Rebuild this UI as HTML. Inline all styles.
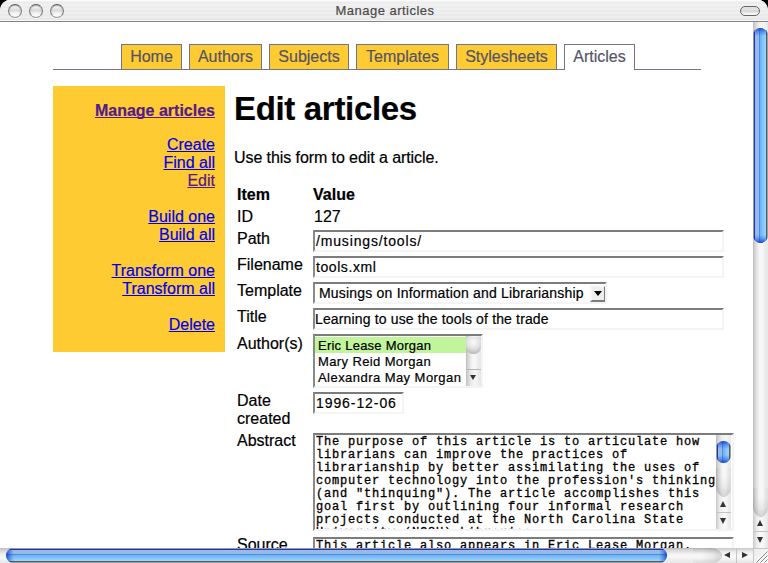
<!DOCTYPE html>
<html><head><meta charset="utf-8">
<style>
*{margin:0;padding:0;box-sizing:border-box}
html,body{width:768px;height:563px;overflow:hidden;background:#000}
body{position:relative;font-family:"Liberation Sans",sans-serif;-webkit-text-stroke:0.2px currentColor}
.a{position:absolute}
#win{position:absolute;left:0;top:0;width:768px;height:563px;background:#fff;border-radius:10px 10px 0 0;overflow:hidden}
#tb{position:absolute;left:0;top:0;width:768px;height:22px;border-bottom:1px solid #858585;
 background:linear-gradient(#fbfbfb 0,#fbfbfb 1px,transparent 1px,transparent 20px,#f5f5f5 20px),repeating-linear-gradient(rgba(255,255,255,.2) 0,rgba(255,255,255,.2) 2px,rgba(0,0,0,0) 2px,rgba(0,0,0,0) 4px),linear-gradient(#eeeeee,#e8e8e8);}
.tl{position:absolute;top:4px;width:14px;height:14px;border-radius:50%;border:1px solid;border-color:#5e5e5e #7e7e7e #959595 #7e7e7e;box-shadow:inset 0 1px 1px rgba(0,0,0,.25),0 1px 0 rgba(255,255,255,.6);background:radial-gradient(ellipse 9px 6px at 50% 85%,#fcfcfc 0,rgba(252,252,252,0) 100%),linear-gradient(#ececec 0%,#f2f2f2 20%,#d2d2d2 48%,#e4e4e4 70%,#f6f6f6 100%)}
#title{position:absolute;left:1px;width:768px;top:3px;text-align:center;font-size:13px;color:#4a4a4a;letter-spacing:0.48px;line-height:15px}
#pill{position:absolute;left:740px;top:6px;width:20px;height:10px;border-radius:5px;border:1px solid #666;background:linear-gradient(#e4e4e4,#e0e0e0 35%,#d4d4d4 50%,#f2f2f2 80%,#fafafa)}
.tab{position:absolute;top:44px;height:26px;border:1px solid #737389;border-bottom:0;background:#ffcb32;color:#555566;font-size:16px;line-height:18px;padding-top:3px;text-align:center}
.tab.on{background:#fff;height:26px}
#tabline{position:absolute;left:53px;top:69px;width:648px;height:1px;background:#737389}
#side{position:absolute;left:53px;top:86px;width:172px;height:266px;background:#ffcb32}
.sl{position:absolute;right:10px;font-size:16px;line-height:18px;white-space:nowrap;text-align:right}
.sl a{color:#0000ee;text-decoration:underline;text-decoration-skip-ink:none}
.sl a.v{color:#551a8b}
.lbl{position:absolute;left:237px;font-size:16px;line-height:18px;color:#000;white-space:nowrap}
.inp{position:absolute;left:313px;height:22px;border-style:solid;border-width:2px;border-color:#7c7c7c #f4f4f4 #f4f4f4 #8a8a8a;background:#fff;font-size:14px;line-height:15px;padding:2px 0 0 1px;white-space:nowrap;overflow:hidden;color:#000}
.ta{position:absolute;left:313px;width:421px;border-style:solid;border-width:2px;border-color:#7c7c7c #f4f4f4 #f4f4f4 #8a8a8a;background:#fff;font-family:"Liberation Mono",monospace;font-size:12px;letter-spacing:0.8px;-webkit-text-stroke:0.3px #000;line-height:13px;white-space:pre;overflow:hidden;padding:1px 0 0 1px}

.vtrack{background:linear-gradient(90deg,#b8b8b8 0,#c8c8c8 1px,#d6d6d6 2px,#e4e4e4 4px,#f4f4f4 6px,#f8f8f8 9px,#ececec 12px,#e8e8e8 15px)}
.htrack{background:linear-gradient(180deg,#b8b8b8 0,#c8c8c8 1px,#d6d6d6 2px,#e4e4e4 4px,#f4f4f4 6px,#f8f8f8 9px,#ececec 12px,#e8e8e8 15px)}
.vthumb{border-radius:7.5px;background:linear-gradient(90deg,#a09890 0,#a09890 1px,#0a3cc8 1px,#0a3cc8 2px,#9ab8e8 2px,#9ab8e8 6px,#4a90e0 6px,#4a90e0 7px,#6ab0f8 7px,#9ad8ff 13px,#5a5a5a 13px,#5a5a5a 14px,#a0a0a0 14px)}
.vthumb:before{content:"";position:absolute;left:0;top:0;right:0;bottom:0;border-radius:inherit;background:linear-gradient(rgba(0,40,190,.75) 0,rgba(10,60,200,.35) 4px,rgba(10,60,200,0) 8px,rgba(10,60,200,0) calc(100% - 8px),rgba(10,60,200,.35) calc(100% - 4px),rgba(0,40,190,.75) 100%)}
.hthumb{border-radius:7.5px;background:linear-gradient(180deg,#a09890 0,#a09890 1px,#0a3cc8 1px,#0a3cc8 2px,#9ab8e8 2px,#9ab8e8 6px,#4a90e0 6px,#4a90e0 7px,#6ab0f8 7px,#9ad8ff 13px,#5a5a5a 13px,#5a5a5a 14px,#a0a0a0 14px)}
.hthumb:before{content:"";position:absolute;left:0;top:0;right:0;bottom:0;border-radius:inherit;background:linear-gradient(90deg,rgba(0,40,190,.75) 0,rgba(10,60,200,.35) 4px,rgba(10,60,200,0) 8px,rgba(10,60,200,0) calc(100% - 8px),rgba(10,60,200,.35) calc(100% - 4px),rgba(0,40,190,.75) 100%)}
.varr{width:15px;background:linear-gradient(90deg,#c0c0c0,#e8e8e8 30%,#f6f6f6 60%,#e4e4e4);border-top:1px solid #b8b8b8}
.harr{height:15px;background:linear-gradient(180deg,#c0c0c0,#e8e8e8 30%,#f6f6f6 60%,#e4e4e4);border-left:1px solid #b8b8b8}
.vbtn{background:linear-gradient(90deg,#c8c8c8,#ececec 25%,#fafafa 55%,#f0f0f0 80%,#e4e4e4)}
.hbtn{background:linear-gradient(180deg,#c8c8c8,#ececec 25%,#fafafa 55%,#f0f0f0 80%,#e4e4e4)}
.vend{border-radius:0 0 7.5px 7.5px/0 0 10px 10px;box-shadow:0 1px 0 #c8c8c8}
.vend:after{content:"";position:absolute;left:0;bottom:0;width:15px;height:28px;border-radius:0 0 7.5px 7.5px/0 0 10px 10px;background:linear-gradient(90deg,rgba(0,0,0,.06),rgba(0,0,0,0) 40%,rgba(0,0,0,0) 70%,rgba(0,0,0,.04)),linear-gradient(rgba(0,0,0,0) 30%,rgba(0,0,0,.05) 70%,rgba(0,0,0,.14))}
.hend{border-radius:0 10px 10px 0/0 7.5px 7.5px 0;box-shadow:1px 0 0 #c8c8c8}
.hend:after{content:"";position:absolute;top:0;right:0;height:15px;width:28px;border-radius:0 10px 10px 0/0 7.5px 7.5px 0;background:linear-gradient(180deg,rgba(0,0,0,.06),rgba(0,0,0,0) 40%,rgba(0,0,0,0) 70%,rgba(0,0,0,.04)),linear-gradient(90deg,rgba(0,0,0,0) 30%,rgba(0,0,0,.05) 70%,rgba(0,0,0,.14))}
.up{position:absolute;width:0;height:0;border-left:3.5px solid transparent;border-right:3.5px solid transparent;border-bottom:6px solid #333}
.dn{position:absolute;width:0;height:0;border-left:3.5px solid transparent;border-right:3.5px solid transparent;border-top:6px solid #333}
.lt{position:absolute;width:0;height:0;border-top:3.5px solid transparent;border-bottom:3.5px solid transparent;border-right:6px solid #333}
.rt{position:absolute;width:0;height:0;border-top:3.5px solid transparent;border-bottom:3.5px solid transparent;border-left:6px solid #333}
</style></head><body>
<div id="win">
 <div id="tb">
  <div class="tl" style="left:8px"></div>
  <div class="tl" style="left:29px"></div>
  <div class="tl" style="left:50px"></div>
  <div id="title">Manage articles</div>
  <div id="pill"></div>
 </div>

 <div class="tab" style="left:121px;width:61px">Home</div>
 <div class="tab" style="left:189px;width:73px">Authors</div>
 <div class="tab" style="left:269px;width:80px">Subjects</div>
 <div class="tab" style="left:356px;width:93px">Templates</div>
 <div class="tab" style="left:456px;width:101px">Stylesheets</div>
 <div id="tabline"></div>
 <div class="tab on" style="left:564px;width:71px">Articles</div>

 <div id="side"></div>
 <div class="sl" style="left:53px;width:162px;top:102px;font-weight:bold"><a class="v">Manage articles</a></div>
 <div class="sl" style="left:53px;width:162px;top:136px"><a>Create</a><br><a>Find all</a><br><a class="v">Edit</a><br><br><a>Build one</a><br><a>Build all</a><br><br><a>Transform one</a><br><a>Transform all</a><br><br><a>Delete</a></div>

 <div class="a" style="left:234px;top:91px;font-size:33px;letter-spacing:-0.33px;font-weight:bold;line-height:36px;white-space:nowrap">Edit articles</div>
 <div class="a" style="left:234px;top:149px;font-size:16px;letter-spacing:-0.08px;line-height:18px;white-space:nowrap">Use this form to edit a article.</div>

 <div class="lbl" style="top:186px;font-weight:bold">Item</div>
 <div class="lbl" style="top:186px;left:313px;font-weight:bold">Value</div>
 <div class="lbl" style="top:208px">ID</div>
 <div class="lbl" style="top:208px;left:314px">127</div>
 <div class="lbl" style="top:230px">Path</div>
 <div class="lbl" style="top:256px">Filename</div>
 <div class="lbl" style="top:282px">Template</div>
 <div class="lbl" style="top:308px">Title</div>
 <div class="lbl" style="top:335px">Author(s)</div>
 <div class="lbl" style="top:392px">Date<br>created</div>
 <div class="lbl" style="top:432px">Abstract</div>
 <div class="lbl" style="top:536px">Source</div>

 <div class="inp" style="top:230px;width:411px;letter-spacing:0.84px">/musings/tools/</div>
 <div class="inp" style="top:256px;width:411px;letter-spacing:0.57px">tools.xml</div>
 <div class="inp" style="top:282px;width:294px;padding-left:4px;letter-spacing:0.2px">Musings on Information and Librarianship
  <div class="a" style="left:275px;top:1px;width:16px;height:17px;border-style:solid;border-width:2px;border-color:#f6f6f6 #7c7c7c #7c7c7c #f6f6f6;background:#eee">
   <div class="a" style="left:2px;top:4px;width:0;height:0;border-left:4px solid transparent;border-right:4px solid transparent;border-top:5px solid #000"></div>
  </div>
 </div>
 <div class="inp" style="top:308px;width:411px;padding-left:0;letter-spacing:0.15px">Learning to use the tools of the trade</div>

 <div class="inp" style="top:334px;width:170px;height:54px;padding:1px 0 0 0">
  <div style="background:#c0f59b;height:16px;width:151px;padding-left:3px;line-height:16px;padding-top:1px;font-size:13px;letter-spacing:0.24px">Eric Lease Morgan</div>
  <div style="height:16px;padding-left:3px;line-height:16px;padding-top:1px;font-size:13px;letter-spacing:0.38px">Mary Reid Morgan</div>
  <div style="height:16px;padding-left:3px;line-height:16px;padding-top:1px;font-size:13px;letter-spacing:0.45px">Alexandra May Morgan</div>
  <div class="a vtrack" style="left:151px;top:0;width:15px;height:50px"></div>
  <div class="a" style="left:151px;top:1px;width:15px;height:17px;border-radius:0 0 7px 7px;background:radial-gradient(circle at 50% 30%,#fafafa 0,#e2e2e2 45%,#bcbcbc 80%,#a8a8a8 100%)"></div>
  <div class="a varr" style="left:151px;top:33px;height:17px"><div class="dn" style="left:4px;top:5px;border-left-width:3.5px;border-right-width:3.5px;border-top-width:5px"></div></div>
 </div>

 <div class="inp" style="top:392px;width:91px;letter-spacing:0.92px">1996-12-06</div>

 <div class="ta" style="top:433px;height:98px">The purpose of this article is to articulate how
librarians can improve the practices of
librarianship by better assimilating the uses of
computer technology into the profession's thinking
(and "thinquing"). The article accomplishes this
goal first by outlining four informal research
projects conducted at the North Carolina State
University (NCSU) Libraries...</div>
 <div class="a vbtn" style="left:716px;top:480px;width:15px;height:49px"></div>
 <div class="a vtrack vend" style="left:716px;top:435px;width:15px;height:61px"></div>
 <div class="a" style="left:716px;top:435px;width:15px;height:6px;background:linear-gradient(90deg,#c0c0c0,#f0f0f0 40%,#f6f6f6 70%,#e6e6e6)"></div>
 <div class="a vthumb" style="left:716px;top:441px;width:15px;height:22px"></div>
 <div class="a" style="left:716px;top:512px;width:15px;height:1px;background:#c4c4c4"></div>
 <div class="up" style="left:720px;top:501px"></div>
 <div class="dn" style="left:720px;top:518px"></div>
 <div class="ta" style="top:537px;height:40px">This article also appears in Eric Lease Morgan.</div>

 <!-- vertical scrollbar -->
 <div class="a vbtn" style="left:753px;top:500px;width:15px;height:48px"></div>
 <div class="a vtrack vend" style="left:753px;top:22px;width:15px;height:494px"></div>
 <div class="a" style="left:753px;top:22px;width:15px;height:8px;background:linear-gradient(90deg,#c0c0c0,#f0f0f0 40%,#f6f6f6 70%,#e6e6e6)"></div>
 <div class="a vthumb" style="left:753px;top:28px;width:15px;height:215px"></div>
 <div class="a" style="left:753px;top:531px;width:15px;height:1px;background:#c4c4c4"></div>
 <div class="up" style="left:757px;top:520px"></div>
 <div class="dn" style="left:757px;top:537px"></div>
 <!-- horizontal scrollbar -->
 <div class="a hbtn" style="left:705px;top:548px;width:48px;height:15px"></div>
 <div class="a htrack hend" style="left:0;top:548px;width:721px;height:15px"></div>
 <div class="a" style="left:0;top:548px;width:7px;height:15px;background:linear-gradient(180deg,#c0c0c0,#f0f0f0 40%,#f6f6f6 70%,#e6e6e6)"></div>
 <div class="a hthumb" style="left:6px;top:548px;width:661px;height:15px"></div>
 <div class="a" style="left:736px;top:548px;width:1px;height:15px;background:#c4c4c4"></div>
 <div class="lt" style="left:724px;top:552px"></div>
 <div class="rt" style="left:742px;top:552px"></div>
 <div class="a" style="left:753px;top:548px;width:15px;height:15px;background:linear-gradient(135deg,#ececec,#fafafa);border-top:1px solid #c8c8c8;border-left:1px solid #c8c8c8">
  <svg width="14" height="14" style="position:absolute;left:0;top:0"><path d="M2.5 13.5 L13.5 2.5 M6.5 13.5 L13.5 6.5 M10.5 13.5 L13.5 10.5" stroke="#8a8a8a" stroke-width="1"/></svg>
 </div>
</div>
</body></html>
